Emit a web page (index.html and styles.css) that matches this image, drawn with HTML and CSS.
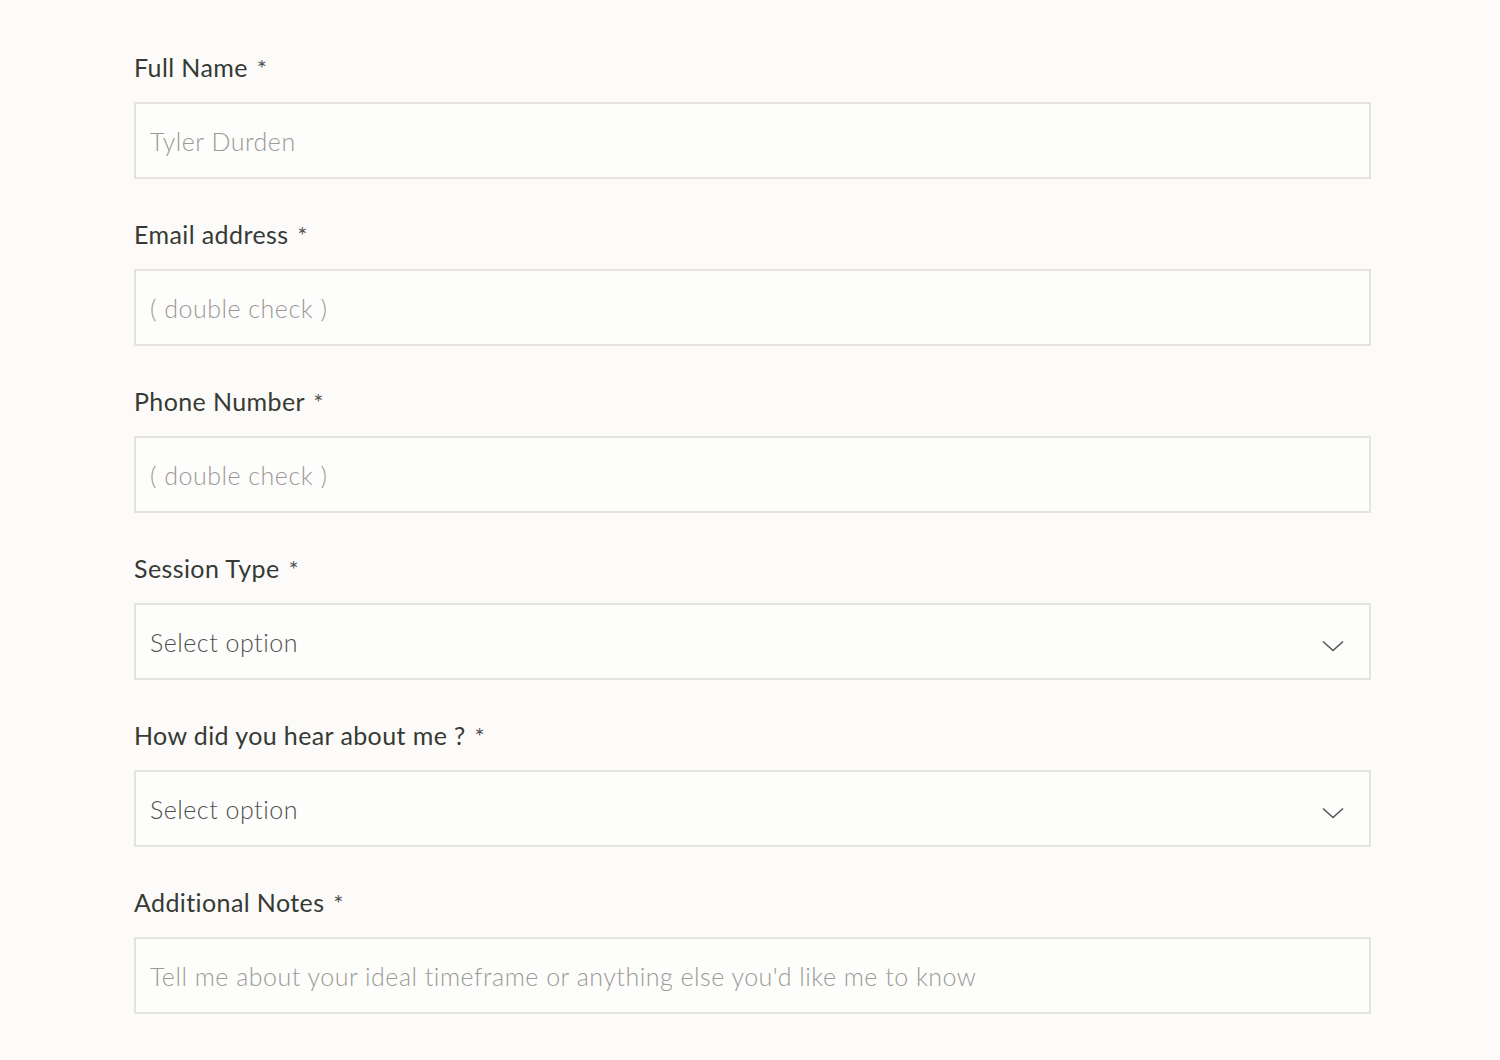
FILE: index.html
```html
<!DOCTYPE html>
<html lang="en">
<head>
    <meta charset="UTF-8">
    <meta name="viewport" content="width=device-width, initial-scale=1.0">
    <title>Booking Form</title>
    <link rel="stylesheet" href="styles.css">
</head>
<body>
    <form class="booking-form">
        <div class="field">
            <label for="name">Full Name <span class="req">*</span></label>
            <input type="text" id="name" placeholder="Tyler Durden">
        </div>
        <div class="field">
            <label for="email">Email address <span class="req">*</span></label>
            <input type="email" id="email" placeholder="( double check )">
        </div>
        <div class="field">
            <label for="phone">Phone Number <span class="req">*</span></label>
            <input type="tel" id="phone" placeholder="( double check )">
        </div>
        <div class="field">
            <label for="session">Session Type <span class="req">*</span></label>
            <div class="select-wrap">
                <select id="session">
                    <option>Select option</option>
                </select>
                <svg class="chevron" width="22" height="12" viewBox="0 0 22 12"><path d="M1 1.5 L11 10.5 L21 1.5" fill="none" stroke="#555" stroke-width="1.6"/></svg>
            </div>
        </div>
        <div class="field">
            <label for="source">How did you hear about me ? <span class="req">*</span></label>
            <div class="select-wrap">
                <select id="source">
                    <option>Select option</option>
                </select>
                <svg class="chevron" width="22" height="12" viewBox="0 0 22 12"><path d="M1 1.5 L11 10.5 L21 1.5" fill="none" stroke="#555" stroke-width="1.6"/></svg>
            </div>
        </div>
        <div class="field">
            <label for="notes">Additional Notes <span class="req">*</span></label>
            <input type="text" id="notes" placeholder="Tell me about your ideal timeframe or anything else you'd like me to know">
        </div>
    </form>
</body>
</html>
```

FILE: styles.css
```css
body {
    margin: 0;
    background-color: #fcfbf9;
    font-family: Lato, "Noto Sans", sans-serif;
}
.booking-form {
    width: 1237px;
    margin-left: 134px;
    padding-top: 50px;
    display: flex;
    flex-direction: column;
    gap: 38px;
}
.field {
    display: flex;
    flex-direction: column;
    gap: 18px;
}
.field label {
    height: 34px;
    font-size: 25px;
    line-height: 34px;
    letter-spacing: 0.4px;
    color: #363a34;
}
.req {
    margin-left: 2px;
    font-size: 24px;
    line-height: 1;
    color: #555;
}
.field input,
.field select {
    box-sizing: border-box;
    width: 100%;
    height: 77px;
    padding: 0 14px;
    border: 2px solid #e4e3de;
    border-radius: 0;
    background-color: #fdfdfc;
    font-family: inherit;
    font-size: 25px;
    font-weight: 300;
    letter-spacing: 0.5px;
    color: #444;
    outline: none;
}
.field input::placeholder {
    color: #9a9a97;
}
.select-wrap {
    position: relative;
    height: 77px;
}
.field select {
    appearance: none;
    color: #4f4f4f;
}
.chevron {
    position: absolute;
    right: 27px;
    top: 37px;
    pointer-events: none;
}
```
